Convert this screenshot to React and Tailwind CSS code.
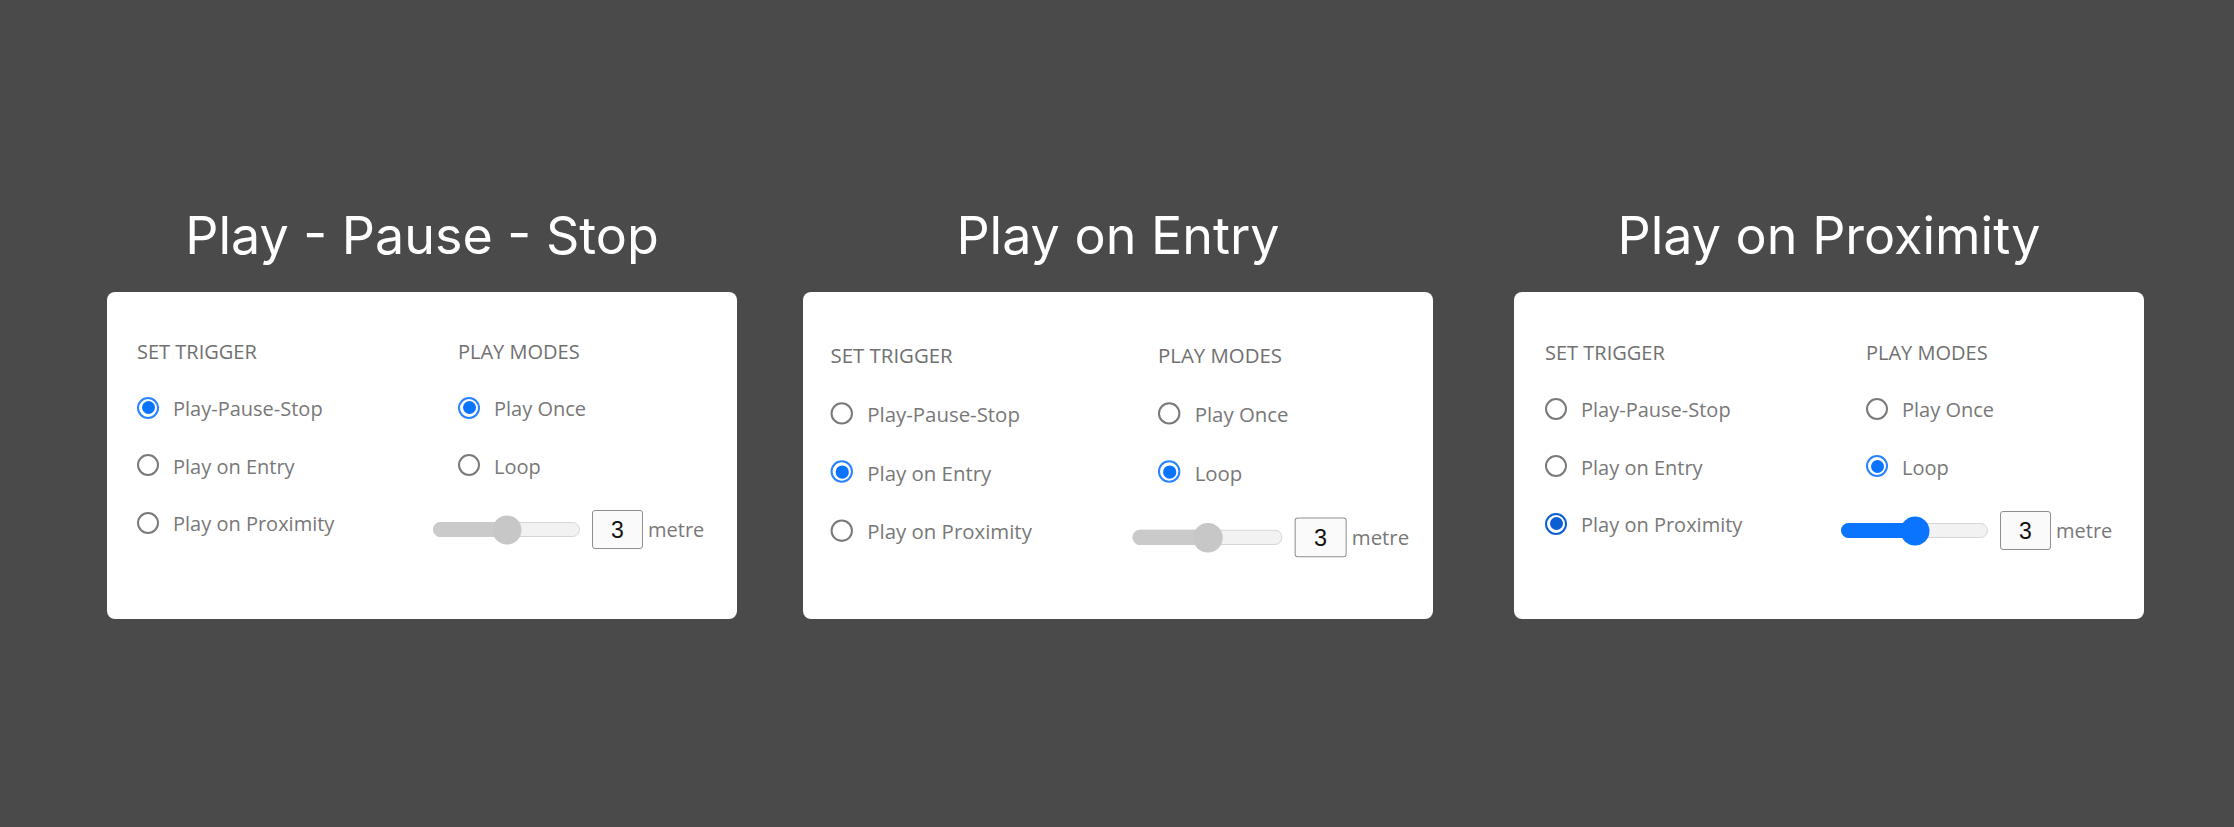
const TRIGGERS = ['Play-Pause-Stop', 'Play on Entry', 'Play on Proximity']
const MODES = ['Play Once', 'Loop']

const CARDS = [
  { title: 'Play - Pause - Stop', trigger: 0, mode: 0, active: false, inner: 'pl-[30px] pt-[46px]' },
  { title: 'Play on Entry', trigger: 1, mode: 1, active: false, inner: 'pl-[27px] pt-[49px] origin-top-left scale-[1.02]' },
  { title: 'Play on Proximity', trigger: 2, mode: 1, active: true, inner: 'pl-[31px] pt-[47px]' },
]

const label = "font-['Open_Sans',sans-serif] text-[20px] leading-[28px]"

function Radio({ checked, pressed }) {
  if (!checked) {
    return <span className="-mt-[3px] w-[22px] h-[22px] shrink-0 rounded-full border-2 border-[#7a7a7a] bg-white" />
  }
  return (
    <span className={`-mt-[3px] w-[22px] h-[22px] shrink-0 rounded-full border-2 bg-white flex items-center justify-center ${pressed ? 'border-[#0c5fd2]' : 'border-[#2a83ff]'}`}>
      <span className={`w-[13px] h-[13px] rounded-full ${pressed ? 'bg-[#0c5fd2]' : 'bg-[#0a74ff]'}`} />
    </span>
  )
}

function Option({ text, checked, pressed }) {
  return (
    <div className="flex items-center h-[28px] gap-[14px]">
      <Radio checked={checked} pressed={pressed} />
      <span className={`${label} text-[#787878] whitespace-nowrap`}>{text}</span>
    </div>
  )
}

function Slider({ active }) {
  return (
    <div className="relative w-[147px] h-[15px]">
      <div className="absolute inset-0 rounded-full bg-[#f2f2f2] border border-[#d6d6d6]" />
      <div className={`absolute left-0 top-0 h-[15px] w-1/2 rounded-l-full ${active ? 'bg-[#0a74ff]' : 'bg-[#cacaca]'}`} />
      <div className={`absolute left-1/2 top-1/2 -translate-x-1/2 -translate-y-1/2 w-[29px] h-[29px] rounded-full ${active ? 'bg-[#0a74ff]' : 'bg-[#c7c7c7]'}`} />
    </div>
  )
}

function Card({ trigger, mode, active, inner }) {
  return (
    <div className="w-[630px] h-[327px] bg-white rounded-[8px] overflow-hidden">
      <div className={`flex ${inner}`}>
        {/* Set trigger */}
        <div className="w-[321px] shrink-0">
          <div className={`${label} text-[#707070] uppercase`}>Set Trigger</div>
          <div className="mt-[29.3px] flex flex-col gap-[29.5px]">
            {TRIGGERS.map((t, i) => (
              <Option key={t} text={t} checked={i === trigger} pressed={active && i === trigger} />
            ))}
          </div>
        </div>

        {/* Play modes */}
        <div className="shrink-0">
          <div className={`${label} text-[#707070] uppercase`}>Play Modes</div>
          <div className="mt-[29.3px] flex flex-col gap-[29.5px]">
            {MODES.map((m, i) => (
              <Option key={m} text={m} checked={i === mode} />
            ))}
            <div className="-ml-[25px] h-[39px] flex items-center">
              <Slider active={active} />
              <div className="ml-[12px] w-[51px] h-[39px] border border-[#8f8f8f] rounded-[3px] bg-[#fafafa] flex items-center justify-center font-['Liberation_Sans',Arial,sans-serif] text-[23px] text-[#111]">
                3
              </div>
              <span className={`ml-[5px] ${label} text-[#787878]`}>metre</span>
            </div>
          </div>
        </div>
      </div>
    </div>
  )
}

export default function App() {
  return (
    <div className="w-full h-[827px] bg-[#4a4a4a] pt-[204px] pl-[107px] flex items-start">
      {CARDS.map((c, i) => (
        <div key={c.title} className={`w-[630px] flex flex-col items-center ${i === 1 ? 'ml-[66px]' : i === 2 ? 'ml-[81px]' : ''}`}>
          <h2 className="font-['Inter',sans-serif] text-[52px] leading-[64px] font-normal text-white whitespace-nowrap">
            {c.title}
          </h2>
          <div className="mt-[24px]">
            <Card {...c} />
          </div>
        </div>
      ))}
    </div>
  )
}
